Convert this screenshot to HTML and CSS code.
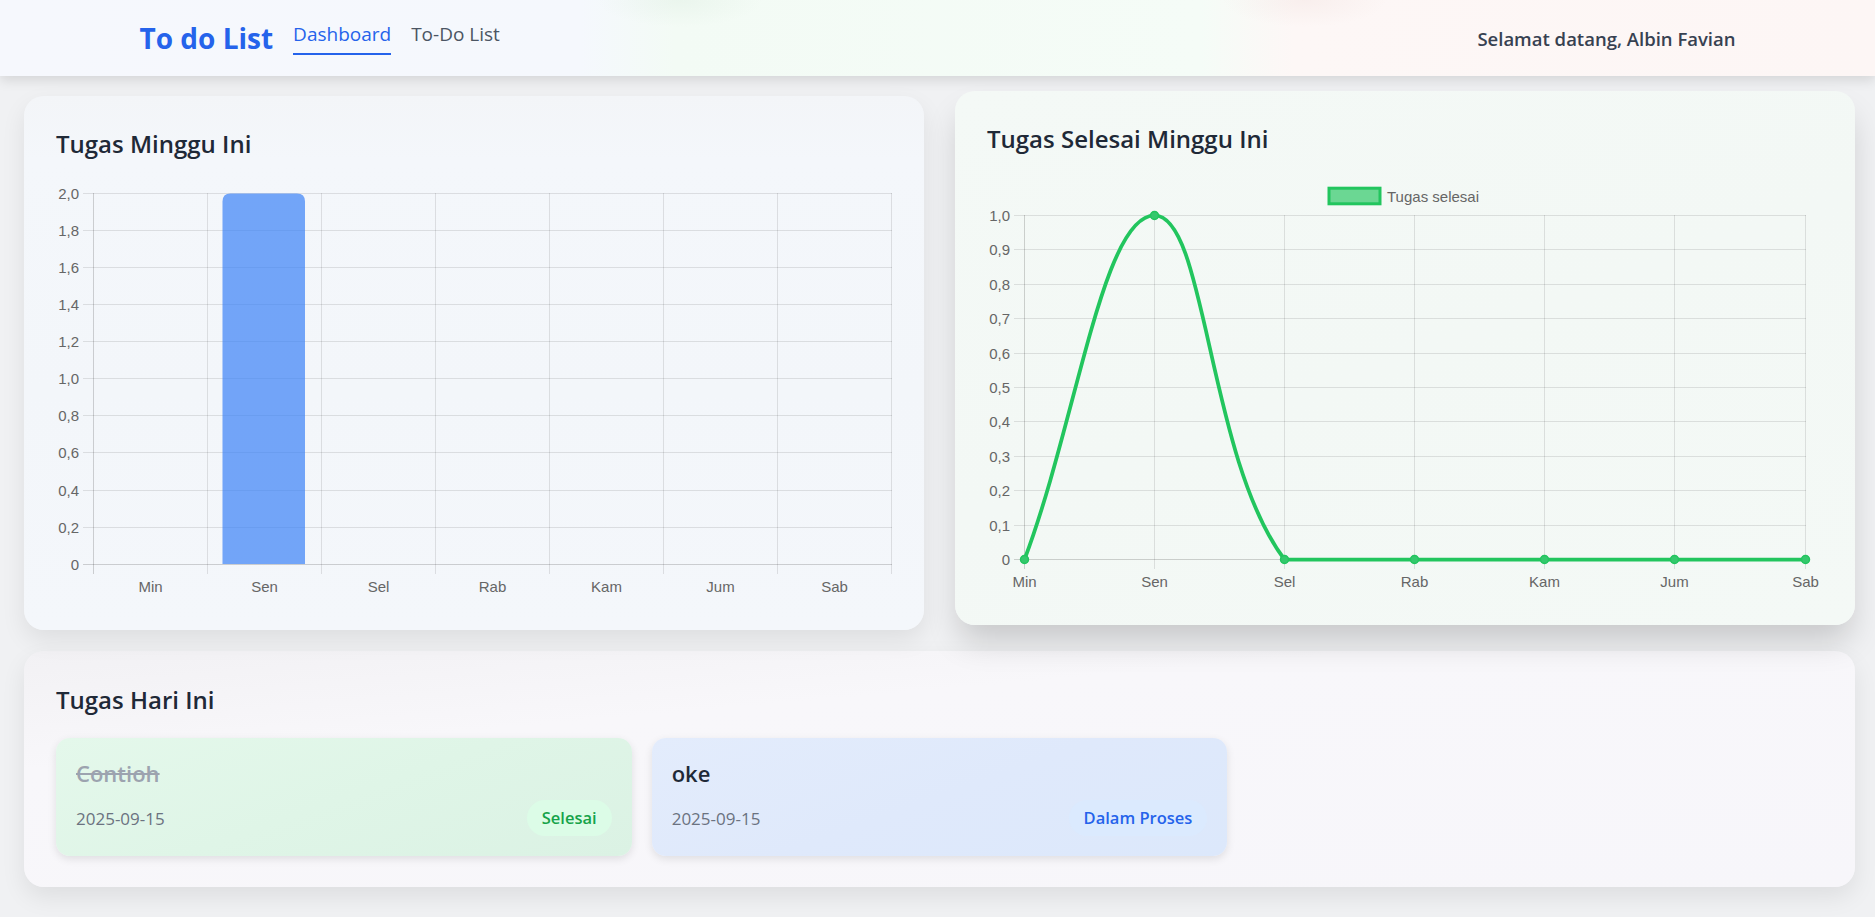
FILE: index.html
```html
<!DOCTYPE html>
<html lang="id">
<head>
<meta charset="utf-8">
<title>To do List - Dashboard</title>
<link rel="stylesheet" href="styles.css">
</head>
<body>
<header class="topbar">
  <div class="topbar-inner">
    <div class="nav-left">
      <span class="brand">To do List</span>
      <a class="nav-link active">Dashboard</a>
      <a class="nav-link">To-Do List</a>
    </div>
    <div class="user">Selamat datang, Albin Favian</div>
  </div>
</header>

<main class="page">
  <div class="charts">
    <section class="card card-blue">
      <h2 class="card-title">Tugas Minggu Ini</h2>
      <svg class="chart" viewBox="0 0 836 420" width="836" height="420">
        <g class="grid">
          <line x1="27" x2="836" y1="13.5" y2="13.5"/>
          <line x1="27" x2="836" y1="50.5" y2="50.5"/>
          <line x1="27" x2="836" y1="87.5" y2="87.5"/>
          <line x1="27" x2="836" y1="124.5" y2="124.5"/>
          <line x1="27" x2="836" y1="161.5" y2="161.5"/>
          <line x1="27" x2="836" y1="198.5" y2="198.5"/>
          <line x1="27" x2="836" y1="235.5" y2="235.5"/>
          <line x1="27" x2="836" y1="272.5" y2="272.5"/>
          <line x1="27" x2="836" y1="310.5" y2="310.5"/>
          <line x1="27" x2="836" y1="347.5" y2="347.5"/>
          <line x1="151.5" x2="151.5" y1="13" y2="394"/>
          <line x1="265.5" x2="265.5" y1="13" y2="394"/>
          <line x1="379.5" x2="379.5" y1="13" y2="394"/>
          <line x1="493.5" x2="493.5" y1="13" y2="394"/>
          <line x1="607.5" x2="607.5" y1="13" y2="394"/>
          <line x1="721.5" x2="721.5" y1="13" y2="394"/>
          <line x1="835.5" x2="835.5" y1="13" y2="394"/>
        </g>
        <path class="bar" d="M166.5 384 V21.5 Q166.5 13.5 174.5 13.5 H241 Q249 13.5 249 21.5 V384 Z"/>
        <g class="axis">
          <line x1="37.5" x2="37.5" y1="13" y2="394"/>
          <line x1="27" x2="836" y1="384.5" y2="384.5"/>
        </g>
        <g class="tick tick-y">
          <text x="23" y="18.5">2,0</text>
          <text x="23" y="55.5">1,8</text>
          <text x="23" y="92.5">1,6</text>
          <text x="23" y="129.5">1,4</text>
          <text x="23" y="166.5">1,2</text>
          <text x="23" y="203.5">1,0</text>
          <text x="23" y="240.5">0,8</text>
          <text x="23" y="277.5">0,6</text>
          <text x="23" y="315.5">0,4</text>
          <text x="23" y="352.5">0,2</text>
          <text x="23" y="389.5">0</text>
        </g>
        <g class="tick tick-x">
          <text x="94.5" y="411.5">Min</text>
          <text x="208.5" y="411.5">Sen</text>
          <text x="322.5" y="411.5">Sel</text>
          <text x="436.5" y="411.5">Rab</text>
          <text x="550.5" y="411.5">Kam</text>
          <text x="664.5" y="411.5">Jum</text>
          <text x="778.5" y="411.5">Sab</text>
        </g>
      </svg>
    </section>

    <section class="card card-green">
      <h2 class="card-title">Tugas Selesai Minggu Ini</h2>
      <svg class="chart" viewBox="0 0 836 420" width="836" height="420">
        <g class="legend">
          <rect x="342" y="13.2" width="51" height="15.6"/>
          <text class="tick" x="400" y="26.5">Tugas selesai</text>
        </g>
        <g class="grid">
          <line x1="27" x2="819" y1="40.5" y2="40.5"/>
          <line x1="27" x2="819" y1="74.5" y2="74.5"/>
          <line x1="27" x2="819" y1="109.5" y2="109.5"/>
          <line x1="27" x2="819" y1="143.5" y2="143.5"/>
          <line x1="27" x2="819" y1="178.5" y2="178.5"/>
          <line x1="27" x2="819" y1="212.5" y2="212.5"/>
          <line x1="27" x2="819" y1="246.5" y2="246.5"/>
          <line x1="27" x2="819" y1="281.5" y2="281.5"/>
          <line x1="27" x2="819" y1="315.5" y2="315.5"/>
          <line x1="27" x2="819" y1="350.5" y2="350.5"/>
          <line x1="167.5" x2="167.5" y1="40" y2="394"/>
          <line x1="297.5" x2="297.5" y1="40" y2="394"/>
          <line x1="427.5" x2="427.5" y1="40" y2="394"/>
          <line x1="557.5" x2="557.5" y1="40" y2="394"/>
          <line x1="687.5" x2="687.5" y1="40" y2="394"/>
          <line x1="818.5" x2="818.5" y1="40" y2="394"/>
        </g>
        <g class="axis">
          <line x1="37.5" x2="37.5" y1="40" y2="394"/>
          <line x1="27" x2="819" y1="384.5" y2="384.5"/>
        </g>
        <g class="tick tick-y">
          <text x="23" y="45.5">1,0</text>
          <text x="23" y="79.5">0,9</text>
          <text x="23" y="114.5">0,8</text>
          <text x="23" y="148.5">0,7</text>
          <text x="23" y="183.5">0,6</text>
          <text x="23" y="217.5">0,5</text>
          <text x="23" y="251.5">0,4</text>
          <text x="23" y="286.5">0,3</text>
          <text x="23" y="320.5">0,2</text>
          <text x="23" y="355.5">0,1</text>
          <text x="23" y="389.5">0</text>
        </g>
        <g class="tick tick-x">
          <text x="37.5" y="411.5">Min</text>
          <text x="167.5" y="411.5">Sen</text>
          <text x="297.5" y="411.5">Sel</text>
          <text x="427.5" y="411.5">Rab</text>
          <text x="557.5" y="411.5">Kam</text>
          <text x="687.5" y="411.5">Jum</text>
          <text x="818.5" y="411.5">Sab</text>
        </g>
        <path class="line" d="M37.5 384.5 C89.5 246.9 115.5 40.5 167.5 40.5 C219.5 40.5 220.6 282.8 297.5 384.5 L818.5 384.5"/>
        <g class="points">
          <circle cx="37.5" cy="384.5" r="4"/>
          <circle cx="167.5" cy="40.5" r="4"/>
          <circle cx="297.5" cy="384.5" r="4"/>
          <circle cx="427.5" cy="384.5" r="4"/>
          <circle cx="557.5" cy="384.5" r="4"/>
          <circle cx="687.5" cy="384.5" r="4"/>
          <circle cx="818.5" cy="384.5" r="4"/>
        </g>
      </svg>
    </section>
  </div>

  <section class="card card-today">
    <h2 class="card-title today-title">Tugas Hari Ini</h2>
    <div class="tasks">
      <div class="task task-done">
        <div class="task-title done">Contioh</div>
        <div class="task-meta">
          <span class="date">2025-09-15</span>
          <span class="badge badge-done">Selesai</span>
        </div>
      </div>
      <div class="task task-progress">
        <div class="task-title">oke</div>
        <div class="task-meta">
          <span class="date">2025-09-15</span>
          <span class="badge badge-progress">Dalam Proses</span>
        </div>
      </div>
    </div>
  </section>
</main>
</body>
</html>
```

FILE: styles.css
```css
* {
  box-sizing: border-box;
}

body {
  margin: 0;
  background: #f0f1f3;
  font-family: "Open Sans", "Noto Sans", sans-serif;
  color: #1f2937;
}

/* ---------- Top bar ---------- */
.topbar {
  position: relative;
  z-index: 2;
  height: 76px;
  background:
    radial-gradient(ellipse 110px 36px at 680px 0px, rgba(190, 215, 195, 0.16), transparent 75%),
    radial-gradient(ellipse 110px 36px at 1305px 0px, rgba(225, 195, 190, 0.16), transparent 75%),
    linear-gradient(90deg, #f6f8fd 0%, #f5f8fd 31%, #f3fbf5 36%, #f5fcf7 64%, #fdf7f6 69%, #fdf6f5 100%);
  box-shadow: 0 4px 12px rgba(0, 0, 0, 0.12);
}

.topbar-inner {
  max-width: 1600px;
  height: 100%;
  margin: 0 auto;
  padding: 0 2px;
  display: flex;
  align-items: center;
  justify-content: space-between;
}

.nav-left {
  display: flex;
  align-items: center;
  gap: 20px;
}

.brand {
  font-size: 28px;
  line-height: 38px;
  font-weight: 700;
  color: #2563eb;
}

.nav-link {
  font-size: 19px;
  line-height: 26px;
  color: #4b5563;
  padding-bottom: 6px;
  border-bottom: 2px solid transparent;
  text-decoration: none;
}

.nav-link.active {
  color: #2563eb;
  font-weight: 500;
  border-bottom-color: #2563eb;
}

.user {
  font-size: 18.5px;
  font-weight: 600;
  color: #374151;
}

/* ---------- Page ---------- */
.page {
  padding: 20px 20px 30px 24px;
}

.charts {
  display: grid;
  grid-template-columns: 1fr 1fr;
  gap: 31px;
}

.card {
  border-radius: 20px;
  padding: 32px 32px 30px;
  box-shadow: 0 10px 25px rgba(0, 0, 0, 0.08);
}

.card-blue {
  background: linear-gradient(180deg, #f3f5f8 0%, #f4f7fb 12%, #f3f6fa 55%, #f4f7fb 100%);
}

.card-green {
  background: linear-gradient(160deg, #f4f9f6 0%, #f3f8f5 50%, #f4f9f6 100%);
  transform: translateY(-5px);
  box-shadow: 0 20px 32px -4px rgba(0, 0, 0, 0.17);
}

.card-title {
  margin: 0 0 20px;
  font-size: 24px;
  line-height: 32px;
  font-weight: 600;
  color: #1f2937;
}

.chart {
  display: block;
  overflow: visible;
}

.grid line {
  stroke: rgba(0, 0, 0, 0.1);
  stroke-width: 1;
}

.axis line {
  stroke: rgba(0, 0, 0, 0.17);
  stroke-width: 1;
}

.bar {
  fill: rgba(59, 130, 246, 0.7);
}

.tick {
  font-family: "Liberation Sans", Arial, sans-serif;
  font-size: 15px;
  fill: #666666;
}

.tick-y text {
  text-anchor: end;
}

.tick-x text {
  text-anchor: middle;
}

.legend rect {
  fill: rgba(34, 197, 94, 0.65);
  stroke: #22c55e;
  stroke-width: 3;
}

.line {
  fill: none;
  stroke: #22c55e;
  stroke-width: 3.75;
  stroke-linejoin: round;
  stroke-linecap: round;
}

.points circle {
  fill: #34c86d;
  stroke: #22c55e;
  stroke-width: 1.5;
}

/* ---------- Today ---------- */
.card-today {
  margin-top: 21px;
  padding: 33px 32px 31px;
  background: linear-gradient(175deg, #f2f1f4 0%, #f8f7fa 30%, #f7f6fa 100%);
}

.today-title {
  margin-bottom: 22px;
}

.tasks {
  display: grid;
  grid-template-columns: repeat(3, 1fr);
  gap: 20px;
}

.task {
  border-radius: 14px;
  padding: 20px;
  box-shadow: 0 3px 8px rgba(0, 0, 0, 0.1);
}

.task-done {
  background: linear-gradient(160deg, #e4f8eb 0%, #dff5e7 50%, #dbf2e4 100%);
}

.task-progress {
  background: linear-gradient(160deg, #e3ecfc 0%, #dfe9fb 50%, #dce8fb 100%);
}

.task-title {
  margin-bottom: 12px;
  font-size: 22px;
  line-height: 30px;
  font-weight: 600;
  color: #1f2937;
}

.task-title.done {
  color: #9ca3af;
  text-decoration: line-through;
}

.task-meta {
  display: flex;
  align-items: center;
  justify-content: space-between;
}

.date {
  font-size: 17px;
  color: #6b7280;
}

.badge {
  height: 36px;
  line-height: 36px;
  padding: 0 15px;
  border-radius: 999px;
  font-size: 16.5px;
  font-weight: 600;
}

.badge-done {
  background: #dcfce7;
  color: #16a34a;
}

.badge-progress {
  background: #dbeafe;
  color: #2563eb;
}
```
